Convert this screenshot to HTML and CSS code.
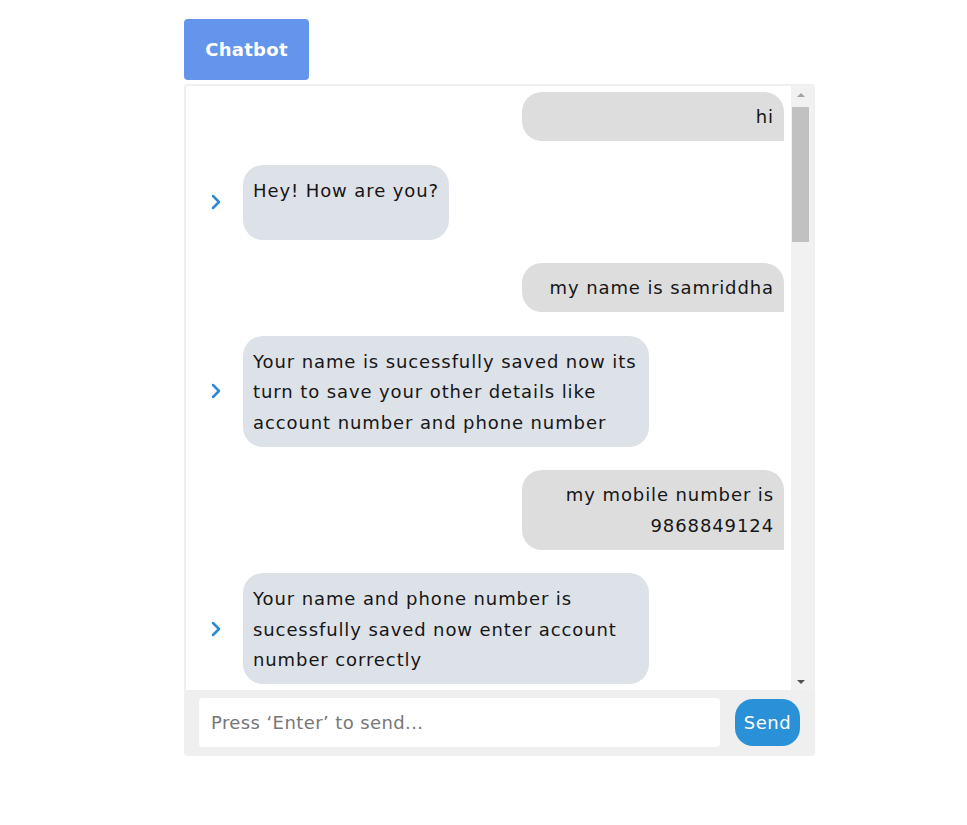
FILE: index.html
```html
<!DOCTYPE html>
<html lang="en">
<head>
<meta charset="utf-8">
<title>Chatbot</title>
<link rel="stylesheet" href="styles.css">
</head>
<body>
<div class="page">
  <div class="title-btn">Chatbot</div>
  <div class="chat">
    <div class="messages">
      <div class="list">
        <div class="row user"><div class="bubble user-bubble">hi</div></div>
        <div class="row bot">
          <span class="bot-icon"><svg width="16" height="16" viewBox="0 0 16 16"><polyline points="5,2 11,8 5,14" fill="none" stroke="#2b8ad2" stroke-width="2.5" stroke-linecap="round" stroke-linejoin="round"/></svg></span>
          <div class="bubble bot-bubble">Hey! How are you?</div>
        </div>
        <div class="row user"><div class="bubble user-bubble">my name is samriddha</div></div>
        <div class="row bot">
          <span class="bot-icon"><svg width="16" height="16" viewBox="0 0 16 16"><polyline points="5,2 11,8 5,14" fill="none" stroke="#2b8ad2" stroke-width="2.5" stroke-linecap="round" stroke-linejoin="round"/></svg></span>
          <div class="bubble bot-bubble">Your name is sucessfully saved now its turn to save your other details like account number and phone number</div>
        </div>
        <div class="row user"><div class="bubble user-bubble">my mobile number is 9868849124</div></div>
        <div class="row bot">
          <span class="bot-icon"><svg width="16" height="16" viewBox="0 0 16 16"><polyline points="5,2 11,8 5,14" fill="none" stroke="#2b8ad2" stroke-width="2.5" stroke-linecap="round" stroke-linejoin="round"/></svg></span>
          <div class="bubble bot-bubble">Your name and phone number is sucessfully saved now enter account number correctly</div>
        </div>
      </div>
      <div class="scrollbar">
        <span class="arrow arrow-up"></span>
        <div class="track"><div class="thumb"></div></div>
        <span class="arrow arrow-down"></span>
      </div>
    </div>
    <div class="composer">
      <input class="input" type="text" placeholder="Press ‘Enter’ to send...">
      <button class="send">Send</button>
    </div>
  </div>
</div>
</body>
</html>
```
FILE: styles.css
```css
* { box-sizing: border-box; }
body {
  margin: 0;
  background: #fff;
  font-family: "DejaVu Sans", "Open Sans", sans-serif;
  color: #161616;
}
.page {
  padding: 19px 0 0 184px;
}
.title-btn {
  width: 125px;
  height: 61px;
  background: #6495ed;
  border-radius: 4px;
  color: #fff;
  font-weight: 700;
  font-size: 18px;
  letter-spacing: 0.3px;
  display: flex;
  align-items: center;
  justify-content: center;
  margin-bottom: 4px;
}
.chat {
  width: 631px;
  border: 2px solid #efefef;
  border-radius: 4px;
  background: #efefef;
}
.messages {
  display: flex;
  height: 604px;
  background: #fff;
}
.list {
  flex: 1;
  overflow: hidden;
  padding: 6px 7px 0 0;
  display: flex;
  flex-direction: column;
  gap: 23.5px;
}
.row { display: flex; }
.row.user { justify-content: flex-end; }
.row.bot { align-items: center; padding-left: 18px; }
.bot-icon {
  width: 24px;
  display: flex;
  justify-content: center;
  margin-right: 15px;
}
.bubble {
  font-size: 18px;
  letter-spacing: 0.9px;
  line-height: 30.5px;
  padding: 10px 10px 8.5px;
}
.user-bubble {
  width: 262px;
  background: #dddddd;
  text-align: right;
  border-radius: 20px 20px 0 20px;
}
.bot-bubble {
  max-width: 406px;
  min-height: 75px;
  padding-top: 11px;
  background: #dde1e8;
  border-radius: 20px;
}
.scrollbar {
  width: 22px;
  background: #f1f1f1;
  padding-left: 1px;
  display: flex;
  flex-direction: column;
  align-items: flex-start;
}
.arrow {
  width: 17px;
  height: 17px;
  display: flex;
  align-items: center;
  justify-content: center;
}
.arrow::before {
  content: "";
  border-left: 4px solid transparent;
  border-right: 4px solid transparent;
}
.arrow-up::before { border-bottom: 4px solid #a3a3a3; }
.arrow-down::before { border-top: 4px solid #505050; }
.track { flex: 1; width: 17px; padding-top: 4px; }
.thumb { width: 17px; height: 135px; background: #c1c1c1; }
.composer {
  display: flex;
  align-items: center;
  gap: 15px;
  padding: 8px 13px 7px 13px;
}
.input {
  flex: 1;
  height: 49px;
  border: none;
  border-radius: 4px;
  background: #fff;
  padding: 0 12px;
  font-family: inherit;
  font-size: 18px;
  letter-spacing: 0.4px;
  color: #333;
  outline: none;
}
.input::placeholder { color: #777; }
.send {
  width: 65px;
  height: 47px;
  border: none;
  border-radius: 18px;
  background: #2a91d9;
  color: #fff;
  font-family: inherit;
  font-size: 18px;
  letter-spacing: 0.6px;
  padding: 0;
}
```
